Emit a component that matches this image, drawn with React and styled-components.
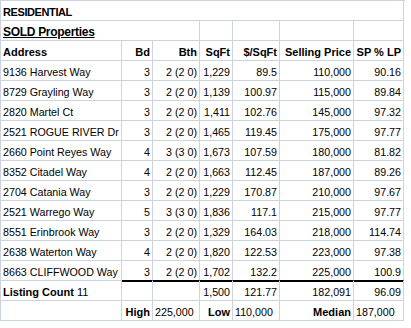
import styled, { createGlobalStyle, css } from 'styled-components'

const GlobalStyle = createGlobalStyle`
  html, body {
    margin: 0;
    padding: 0;
    background: #ffffff;
  }
  body {
    font-family: "Liberation Sans", Arial, sans-serif;
    color: #000;
  }
`

const GRID = '#cdd4e0'

const Sheet = styled.div`
  display: grid;
  grid-template-columns: 121px 31px 47px 33px 47px 74px 50px;
  grid-auto-rows: 20px;
  width: 404px;
  border-left: 1px solid ${GRID};
  border-top: 1px solid ${GRID};
  font-size: 10.7px;
`

const Cell = styled.div`
  box-sizing: border-box;
  display: flex;
  align-items: flex-end;
  justify-content: ${({ $align }) => ($align === 'right' ? 'flex-end' : 'flex-start')};
  padding: 0 2px 1px 2px;
  line-height: 13px;
  white-space: nowrap;
  border-right: 1px solid ${GRID};
  border-bottom: 1px solid ${({ $blackBottom }) => ($blackBottom ? '#000' : GRID)};
  font-weight: ${({ $bold }) => ($bold ? 700 : 400)};
  font-size: ${({ $bold }) => ($bold ? '11px' : 'inherit')};
  grid-column: ${({ $span }) => ($span ? `span ${$span}` : 'auto')};
  ${({ $blackTop }) =>
    $blackTop &&
    css`
      box-shadow: inset 0 1px 0 #000;
    `}
`

const Title = styled(Cell)`
  font-weight: 700;
  font-size: 11px;
  letter-spacing: -0.4px;
`

const Section = styled(Cell)`
  font-weight: 700;
  font-size: 12px;
  text-decoration: underline;
  letter-spacing: -0.3px;
`

const Plain = styled.span`
  font-weight: 400;
`

const headers = ['Address', 'Bd', 'Bth', 'SqFt', '$/SqFt', 'Selling Price', 'SP % LP']

const rows = [
  ['9136 Harvest Way', '3', '2 (2 0)', '1,229', '89.5', '110,000', '90.16'],
  ['8729 Grayling Way', '3', '2 (2 0)', '1,139', '100.97', '115,000', '89.84'],
  ['2820 Martel Ct', '3', '2 (2 0)', '1,411', '102.76', '145,000', '97.32'],
  ['2521 ROGUE RIVER Dr', '3', '2 (2 0)', '1,465', '119.45', '175,000', '97.77'],
  ['2660 Point Reyes Way', '4', '3 (3 0)', '1,673', '107.59', '180,000', '81.82'],
  ['8352 Citadel Way', '4', '2 (2 0)', '1,663', '112.45', '187,000', '89.26'],
  ['2704 Catania Way', '3', '2 (2 0)', '1,229', '170.87', '210,000', '97.67'],
  ['2521 Warrego Way', '5', '3 (3 0)', '1,836', '117.1', '215,000', '97.77'],
  ['8551 Erinbrook Way', '3', '2 (2 0)', '1,329', '164.03', '218,000', '114.74'],
  ['2638 Waterton Way', '4', '2 (2 0)', '1,820', '122.53', '223,000', '97.38'],
  ['8663 CLIFFWOOD Way', '3', '2 (2 0)', '1,702', '132.2', '225,000', '100.9'],
]

export default function App() {
  return (
    <>
      <GlobalStyle />
      <Sheet>
        <Title $span={7}>RESIDENTIAL</Title>

        <Section $span={3}>SOLD Properties</Section>
        <Cell />
        <Cell />
        <Cell />
        <Cell />

        {headers.map((h, i) => (
          <Cell key={h} $bold $align={i === 0 ? 'left' : 'right'}>
            {h}
          </Cell>
        ))}

        {rows.map((r, ri) =>
          r.map((v, ci) => (
            <Cell
              key={`${ri}-${ci}`}
              $align={ci === 0 ? 'left' : 'right'}
              $blackBottom={ri === rows.length - 1 && ci > 0}
            >
              {v}
            </Cell>
          ))
        )}

        <Cell $bold>
          Listing Count&nbsp;<Plain>11</Plain>
        </Cell>
        <Cell $blackTop />
        <Cell $blackTop />
        <Cell $blackTop $align="right">1,500</Cell>
        <Cell $blackTop $align="right">121.77</Cell>
        <Cell $blackTop $align="right">182,091</Cell>
        <Cell $blackTop $align="right">96.09</Cell>

        <Cell />
        <Cell $bold $align="right">High</Cell>
        <Cell>225,000</Cell>
        <Cell $bold $align="right">Low</Cell>
        <Cell>110,000</Cell>
        <Cell $bold $align="right">Median</Cell>
        <Cell>187,000</Cell>
      </Sheet>
    </>
  )
}
